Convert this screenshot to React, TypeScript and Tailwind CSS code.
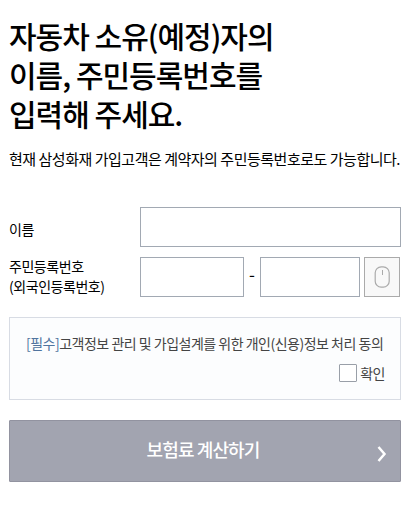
export default function App() {
  return (
    <main className="h-[508px] w-[416px] bg-white pl-[9px] pt-[16px] font-['Noto_Sans_CJK_KR',sans-serif] text-black">
      <h1 className="h-[117px] whitespace-nowrap text-[30px] font-medium leading-[39px] tracking-[-1px]">
        자동차 소유(예정)자의<br />이름, 주민등록번호를<br />입력해 주세요.
      </h1>
      <p className="mt-[15px] h-[22px] whitespace-nowrap text-[15px] leading-[22px] tracking-[-0.48px]">
        현재 삼성화재 가입고객은 계약자의 주민등록번호로도 가능합니다.
      </p>
      <form className="mt-[37px] w-[392px]">
        <div className="flex h-10">
          <label className="w-[131px] pt-[12px] text-[14px] leading-5 tracking-[-0.45px]">이름</label>
          <div className="w-[261px] border border-[#a2a9b3]" />
        </div>
        <div className="mt-[10px] flex h-10">
          <label className="w-[131px] whitespace-nowrap text-[14px] leading-5 tracking-[-0.45px]"><span className="relative -top-px">주민등록번호<br />(외국인등록번호)</span></label>
          <div className="w-[104px] border border-[#a2a9b3]" />
          <span className="w-4 text-center text-[17px] leading-[34px]">-</span>
          <div className="w-[100px] border border-[#a2a9b3]" />
          <button type="button" className="ml-1 flex w-9 items-center justify-center border border-[#aaa] bg-[#f8f8f8]">
            <svg width="16" height="22" viewBox="0 0 16 22" fill="none" stroke="#aaa"><rect x="1.2" y="0.8" width="14" height="20.4" rx="6" strokeWidth="1.2" /><path d="M8.5 4v5" /></svg>
          </button>
        </div>
        <section className="mt-5 h-[83px] border border-[#d8dce4] bg-[#fcfdfe] px-4 pt-[14px] text-[14px] leading-[22px] tracking-[-0.5px] text-[#444]">
          <p className="whitespace-nowrap"><span className="text-[#50749f]">[필수]</span>고객정보 관리 및 가입설계를 위한 개인(신용)정보 처리 동의</p>
          <label className="-mr-px mt-2 flex items-center justify-end gap-[3px]"><span className="size-[18px] rounded-[1px] border border-[#999fa8] bg-white" />확인</label>
        </section>
        <button type="button" className="relative mt-5 block h-[62px] w-full rounded-[1px] border border-[#9293a0] bg-[#a2a4b0] pb-[4px] pr-[4px] text-[18px] font-medium tracking-[-0.9px] text-white">
          보험료 계산하기
          <svg className="absolute right-[13px] top-[25px]" width="10" height="16" viewBox="0 0 10 16" fill="none" stroke="white" strokeWidth="2.5"><path d="m1.5 1 6 7-6 7" /></svg>
        </button>
      </form>
    </main>
  );
}
